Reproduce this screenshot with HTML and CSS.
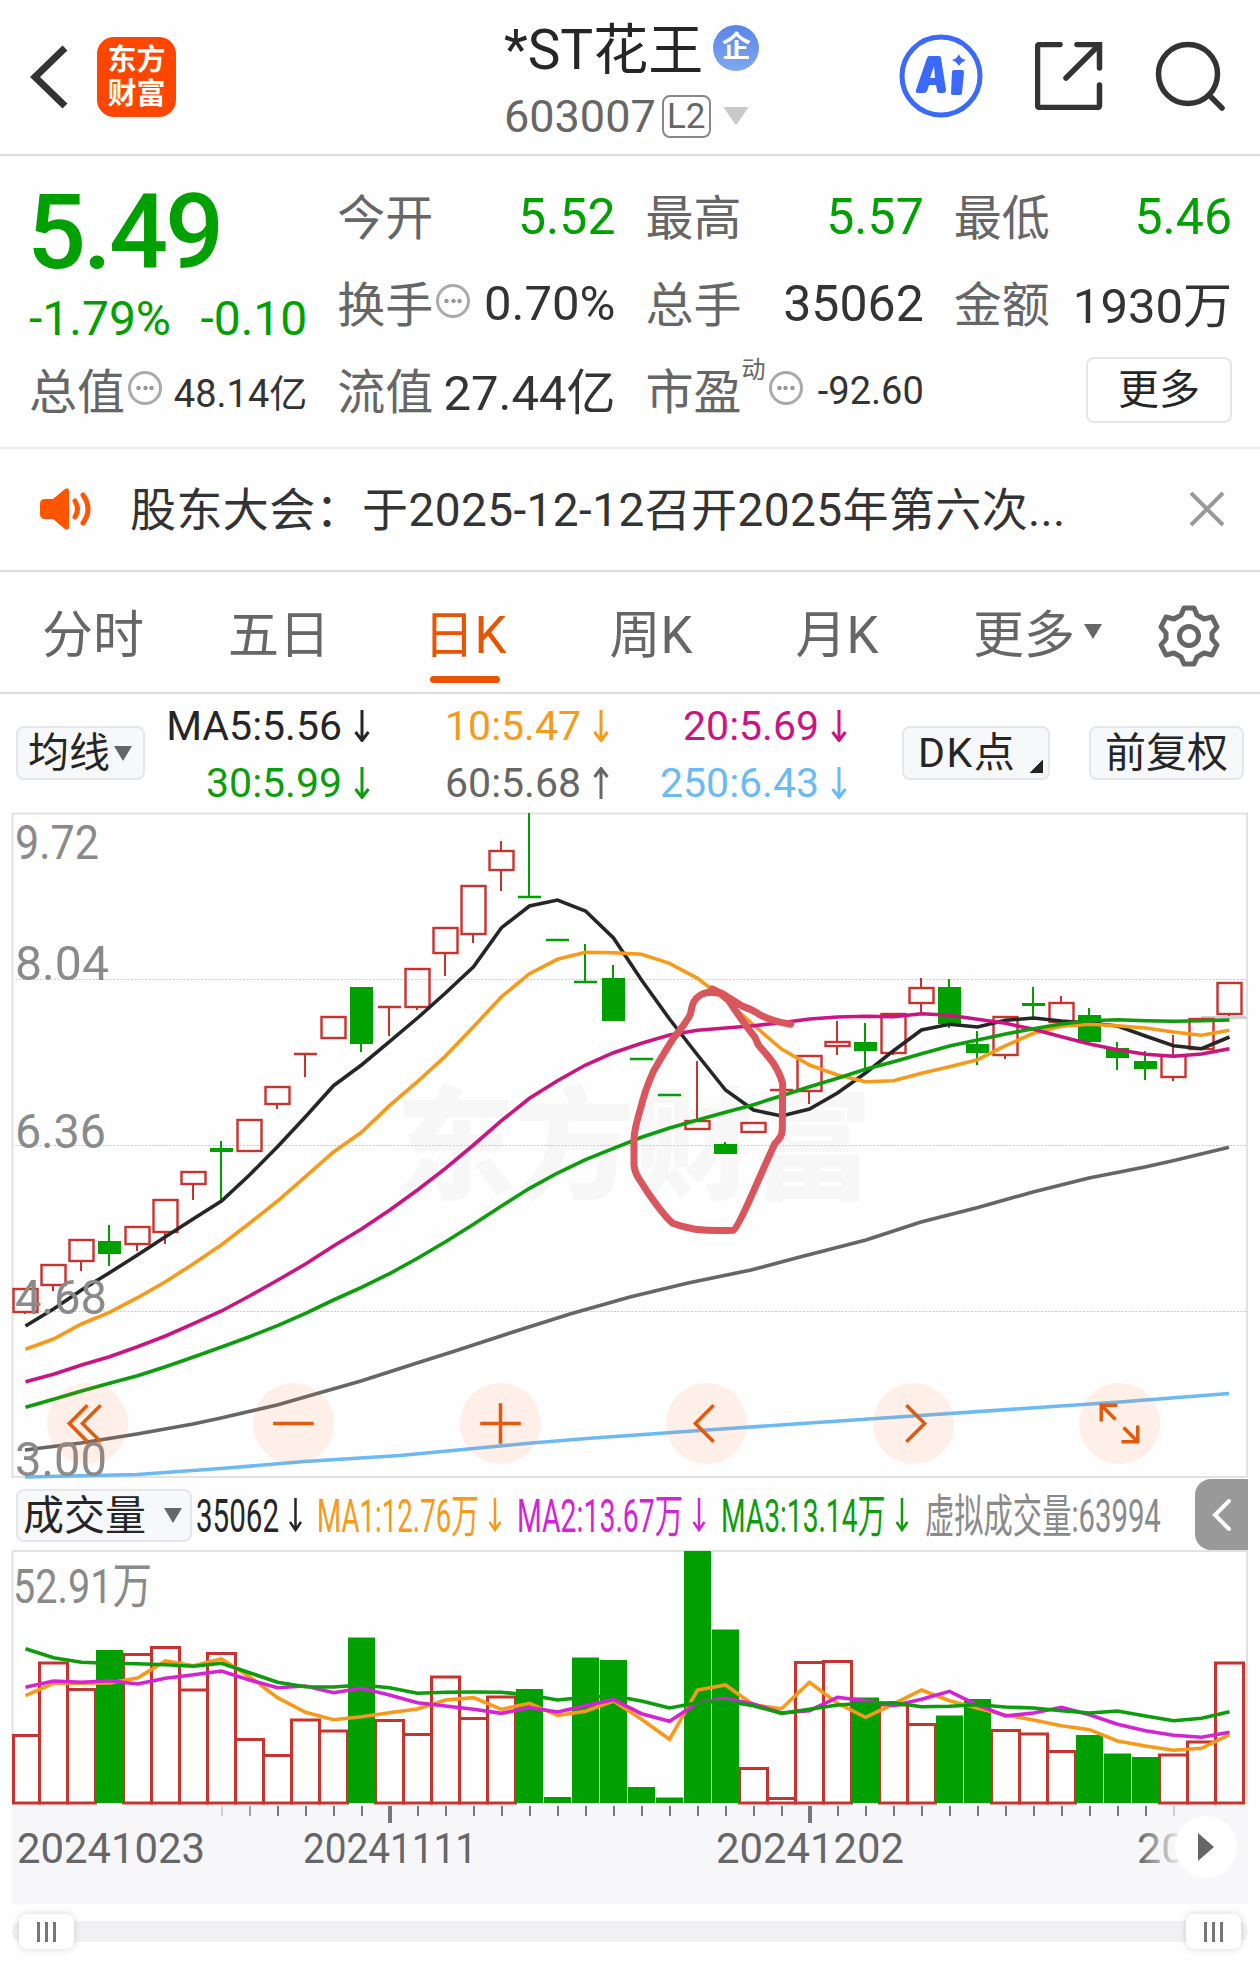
FILE: index.html
```
<!DOCTYPE html>
<html lang="zh-CN">
    <head>
        <meta charset="utf-8">
        <title>*ST花王 603007</title>
        <link rel="stylesheet" href="styles.css">
    </head>
    <body>
        <div class="page">
            <header class="topbar">
                <div class="left">
                    <svg class="back" width="40" height="66" viewBox="0 0 40 66"><path d="M35 4L5 33L35 62"/></svg>
                    <div class="logo"><span>东方</span><span>财富</span></div>
                </div>
                <div class="stock">
                    <div class="name"><span>*ST花王</span><i class="badge">企</i></div>
                    <div class="code">603007<span class="level">L2</span><svg width="26" height="20" viewBox="0 0 26 20"><path d="M2 1h22q2 0 1 1L14 18q-1 1-2 0L1 2q-1-1 1-1z"/></svg></div>
                </div>
                <div class="actions">
                    <svg width="84" height="84" viewBox="0 0 84 84">
                        <circle cx="42" cy="42" r="39" fill="none" stroke="#3a69fb" stroke-width="5"/>
                        <path d="M30 22h10q2 0 2 2l5 32q0 3-3 3h-4q-2 0-2-3l-1-5h-7l-2 6q-1 2-3 2h-6q-3 0-2-3l11-32q1-2 2-2zM35 32l-4 12h5z" fill="#3a69fb" fill-rule="evenodd"/>
                        <path d="M55 36h8q2 0 2 2l-2 21q0 2-2 2h-7q-2 0-2-2l1-21q0-2 2-2z" fill="#3a69fb"/>
                        <path d="M60 20q1 5 7 6q-5 2-7 6q-2-4-7-6q5-1 7-6z" fill="#3a69fb"/>
                    </svg>
                    <svg class="line" width="68" height="68" viewBox="0 0 68 68"><path d="M25 2.500H5q-2.500 0-2.500 2.500V63q0 2.500 2.500 2.500H62q2.500 0 2.500-2.500V43M42 2.500H64.500V26M63 4L31 36"/></svg>
                    <svg class="line" width="70" height="70" viewBox="0 0 70 70"><circle cx="33" cy="33" r="29.500"/><path d="M54 54L67 67"/></svg>
                </div>
            </header>

            <section class="quote">
                <div class="last">
                    <div class="price">5.49</div>
                    <div class="change"><span>-1.79%</span><span>-0.10</span></div>
                </div>
                <div class="cell"><label>今开</label><b class="down">5.52</b></div>
                <div class="cell"><label>最高</label><b class="down">5.57</b></div>
                <div class="cell"><label>最低</label><b class="down">5.46</b></div>
                <div class="cell"><label>换手</label><i class="dots"></i><b class="mid">0.70%</b></div>
                <div class="cell"><label>总手</label><b>35062</b></div>
                <div class="cell"><label>金额</label><b class="mid cjk">1930万</b></div>
                <div class="cell"><label>总值</label><i class="dots"></i><b class="small">48.14亿</b></div>
                <div class="cell"><label>流值</label><b class="mid cjk">27.44亿</b></div>
                <div class="cell"><label>市盈</label><sup>动</sup><i class="dots"></i><b class="small">-92.60</b></div>
                <div class="cell"><button class="more">更多</button></div>
            </section>

            <section class="notice">
                <svg width="52" height="42" viewBox="0 0 52 42"><path d="M5 11h8L25 1q4-2 4 2v36q0 4-4 2L13 31H5q-5 0-5-5V16q0-5 5-5z" fill="#ff5500"/><path d="M35 13q5 8 0 16M43 7q10 14 0 28" fill="none" stroke="#ff5500" stroke-width="5" stroke-linecap="round"/></svg>
                <p>股东大会：于2025-12-12召开2025年第六次...</p>
                <svg class="close" width="36" height="36" viewBox="0 0 36 36"><path d="M2 2L34 34M34 2L2 34"/></svg>
            </section>

            <nav class="tabs">
                <a>分时</a>
                <a>五日</a>
                <a class="active">日K</a>
                <a>周K</a>
                <a>月K</a>
                <a class="drop">更多<i class="tri"></i></a>
                <svg class="gear" width="62" height="62" viewBox="-31 -31 62 62"><path d="M-5 -28H5L8 -21L15 -17L23 -19L28 -9L23 -3V3L28 9L23 19L15 17L8 21L5 28H-5L-8 21L-15 17L-23 19L-28 9L-23 3V-3L-28 -9L-23 -19L-15 -17L-8 -21Z"/><circle r="9.500"/></svg>
            </nav>

            <section class="ma">
                <button class="chip avg">均线<i class="tri"></i></button>
                <div class="values">
                    <span class="c5">MA5:5.56<svg><use href="#arrow"/></svg></span>
                    <span class="c10">10:5.47<svg><use href="#arrow"/></svg></span>
                    <span class="c20">20:5.69<svg><use href="#arrow"/></svg></span>
                    <span class="c30">30:5.99<svg><use href="#arrow"/></svg></span>
                    <span class="c60">60:5.68<svg class="up"><use href="#arrow"/></svg></span>
                    <span class="c250">250:6.43<svg><use href="#arrow"/></svg></span>
                </div>
                <button class="chip dk">DK点<i class="corner"></i></button>
                <button class="chip fq">前复权</button>
            </section>

            <section class="chart">
                <svg id="kline" width="1260" height="665" viewBox="0 813 1260 665">
                    <defs><symbol id="arrow" viewBox="0 0 16 32" overflow="visible"><path d="M8 0V30M1.500 22L8 30.500L14.500 22" fill="none" stroke="currentColor" stroke-width="3"/></symbol></defs>
                </svg>
                <div class="tools">
                    <svg viewBox="-40 -40 80 80"><path d="M0 -18L-18 0L0 18M13 -18L-5 0L13 18"/></svg>
                    <svg viewBox="-40 -40 80 80"><path d="M-20 0H20"/></svg>
                    <svg viewBox="-40 -40 80 80"><path d="M-20 0H20M0 -20V20"/></svg>
                    <svg viewBox="-40 -40 80 80"><path d="M7 -18L-11 0L7 18"/></svg>
                    <svg viewBox="-40 -40 80 80"><path d="M-7 -18L11 0L-7 18"/></svg>
                    <svg viewBox="-40 -40 80 80"><path d="M-18 -2V-18H-2M-18 -18L-4 -4M18 2V18H2M18 18L4 4"/></svg>
                </div>
            </section>

            <section class="vol-legend">
                <button class="chip vol">成交量<i class="tri"></i></button>
                <svg class="legend" width="980" height="72" viewBox="192 1478 980 72">
                    <text transform="translate(196 1532) scale(.643 1)" fill="#262626">35062</text>
                    <text transform="translate(317 1532) scale(.602 1)" fill="#f79a1a">MA1:12.76万</text>
                    <text transform="translate(517 1532) scale(.618 1)" fill="#d423d4">MA2:13.67万</text>
                    <text transform="translate(721 1532) scale(.612 1)" fill="#0c9c0c">MA3:13.14万</text>
                    <text transform="translate(925 1532) scale(.637 1)" fill="#8a8a8a">虚拟成交量:63994</text>
                    <g fill="none" stroke-width="2.500">
                        <path d="M295.500 1498V1530M290 1522L295.500 1530L301 1522" stroke="#262626"/>
                        <path d="M495 1498V1530M489.500 1522L495 1530L500.500 1522" stroke="#f79a1a"/>
                        <path d="M699 1498V1530M693.500 1522L699 1530L704.500 1522" stroke="#d423d4"/>
                        <path d="M902 1498V1530M896.500 1522L902 1530L907.500 1522" stroke="#0c9c0c"/>
                    </g>
                </svg>
                <div class="fold"><svg width="20" height="32" viewBox="0 0 20 32"><path d="M17 2L3 16L17 30"/></svg></div>
            </section>

            <svg id="volume" width="1260" height="255" viewBox="0 1550 1260 255"></svg>
            <section class="axis">
                <svg id="axis" width="1236" height="99" viewBox="12 1805 1236 99"></svg>
                <div class="play"><svg width="16" height="28" viewBox="0 0 16 28"><path d="M0 0L16 14L0 28z"/></svg></div>
            </section>

            <section class="slider">
                <div class="handle"><i></i><i></i><i></i></div>
                <div class="handle"><i></i><i></i><i></i></div>
            </section>
        </div>
        <script src="chart.js"></script>
    </body>
</html>
```
FILE: styles.css
```
:root {
    --green: #00a000;
    --orange: #e85500;
    --text: #262626;
    --gray: #666;
    --line: #dcdcdc;
    --chip: #f7f8fa;
}
* {
    box-sizing: border-box;
}
html, body {
    margin: 0;
    padding: 0;
}
body {
    width: 1260px;
    height: 1967px;
    overflow: hidden;
    background: #fefefe;
    color: #333;
    font-family: Roboto, "Noto Sans CJK SC", sans-serif;
}
svg {
    display: block;
    flex: none;
}
button {
    padding: 0;
    font-family: inherit;
    color: var(--text);
}
i {
    font-style: normal;
}

/* header */
.topbar {
    display: flex;
    height: 156px;
    padding: 0 35px 0 30px;
    border-bottom: 2px solid var(--line);
}
.topbar .left {
    display: flex;
    align-items: center;
    width: 474px;
}
.back {
    fill: none;
    stroke: #333;
    stroke-width: 7;
}
.logo {
    display: flex;
    flex-direction: column;
    justify-content: center;
    align-items: center;
    width: 79px;
    height: 80px;
    margin-left: 27px;
    border-radius: 17px;
    background: #ff4600;
    color: #fff;
    font-size: 29px;
    line-height: 34px;
    font-weight: 700;
}
.stock {
    width: 380px;
    padding-top: 12px;
}
.stock .name {
    display: flex;
    align-items: center;
    height: 72px;
    color: var(--text);
    font-size: 55px;
}
.name span {
    padding-bottom: 6px;
}
.badge {
    width: 46px;
    height: 46px;
    margin-left: 10px;
    border-radius: 50%;
    background: linear-gradient(#5884e8, #7fa8ee);
    color: #fff;
    font-size: 29px;
    line-height: 44px;
    font-weight: 700;
    text-align: center;
}
.stock .code {
    display: flex;
    align-items: center;
    height: 64px;
    color: var(--gray);
    font-size: 45px;
}
.level {
    width: 49px;
    height: 43px;
    margin: 0 12px 0 6px;
    border: 2px solid #888;
    border-radius: 8px;
    font-size: 35px;
    line-height: 39px;
    text-align: center;
}
.code svg {
    fill: #c9c9c9;
}
.actions {
    display: flex;
    flex: 1;
    align-items: center;
    justify-content: space-between;
    padding: 0 0 2px 15px;
}
.line {
    fill: none;
    stroke: #333;
    stroke-width: 5.5;
    stroke-linecap: round;
}

/* quote */
.quote {
    display: grid;
    grid-template-columns: repeat(4, 1fr);
    grid-template-rows: repeat(3, 87px);
    column-gap: 30px;
    height: 293px;
    padding: 17px 28px 0 29px;
    border-bottom: 2px solid #ececec;
}
.last {
    grid-row: span 2;
    color: var(--green);
}
.price {
    height: 110px;
    margin-left: -2px;
    font-size: 104px;
    line-height: 120px;
    font-weight: 500;
    letter-spacing: -3px;
}
.change {
    display: flex;
    justify-content: space-between;
    font-size: 48px;
    line-height: 72px;
}
.cell {
    display: flex;
    align-items: center;
}
.cell label {
    padding-bottom: 5px;
    color: var(--gray);
    font-size: 48px;
}
.cell b {
    margin-left: auto;
    font-size: 50px;
    font-weight: 400;
    white-space: nowrap;
}
.cell .down {
    color: var(--green);
}
.cell .mid {
    font-size: 49px;
}
.cell .cjk {
    padding-bottom: 5px;
}
.cell .small {
    font-size: 38px;
}
.cell sup {
    width: 24px;
    margin-bottom: 42px;
    color: var(--gray);
    font-size: 24px;
    line-height: 1;
}
.dots {
    width: 34px;
    height: 34px;
    margin: -6px 0 0 3px;
    border: 3px solid #aaa;
    border-radius: 50%;
    background: radial-gradient(circle, #999 1.8px, transparent 2.6px) center / 7px 100% no-repeat, radial-gradient(circle, #999 1.8px, transparent 2.6px) 4px 0 / 7px 100% no-repeat, radial-gradient(circle, #999 1.8px, transparent 2.6px) 17px 0 / 7px 100% no-repeat;
}
.more {
    width: 146px;
    height: 66px;
    margin: -2px 0 0 auto;
    border: 2px solid #e6e6e6;
    border-radius: 8px;
    background: #fff;
    font-size: 41px;
    line-height: 56px;
}

/* notice */
.notice {
    display: flex;
    align-items: center;
    height: 123px;
    padding: 0 35px 2px 40px;
    border-bottom: 2px solid var(--line);
}
.notice p {
    flex: 1;
    margin: 0 0 0 38px;
    padding-bottom: 5px;
    font-size: 46px;
    letter-spacing: .4px;
    white-space: nowrap;
}
.close {
    fill: none;
    stroke: #999;
    stroke-width: 4;
}

/* tabs */
.tabs {
    display: grid;
    grid-template-columns: 186px 186px 186px 186px 186px 228px 60px;
    height: 122px;
    border-bottom: 2px solid var(--line);
    color: var(--gray);
    font-size: 51px;
    line-height: 128px;
    text-align: center;
}
.tabs .active {
    display: flex;
    flex-direction: column;
    align-items: center;
    color: var(--orange);
}
.tabs .active::after {
    content: "";
    width: 70px;
    height: 7px;
    margin-top: -24px;
    border-radius: 4px;
    background: var(--orange);
}
.tri {
    display: inline-block;
    border: solid transparent;
    border-width: 15px 9px 0;
    border-top-color: var(--gray);
}
.drop {
    display: flex;
    align-items: center;
    padding-left: 43px;
}
.drop .tri {
    margin: -10px 0 0 9px;
}
.gear {
    align-self: center;
    fill: none;
    stroke: var(--gray);
    stroke-width: 5;
    stroke-linejoin: round;
}

/* moving averages */
.ma {
    display: flex;
    height: 119px;
    padding: 32px 16px 0;
}
.chip {
    display: flex;
    flex: none;
    align-items: center;
    height: 54px;
    border: 2px solid #e4e6eb;
    border-radius: 8px;
    background: var(--chip);
    font-size: 41px;
    line-height: 50px;
}
.avg {
    width: 129px;
    padding-left: 10px;
}
.avg .tri {
    margin-left: 4px;
}
.values {
    display: grid;
    grid-template-columns: 225px 239px 238px;
    grid-template-rows: 57px 57px;
    margin-top: -29px;
    font-size: 41px;
}
.values span {
    display: flex;
    align-items: center;
    justify-content: flex-end;
}
.values svg {
    width: 16px;
    height: 32px;
    margin-left: 12px;
}
.values .up {
    transform: rotate(180deg);
}
.c5 { color: #262626; }
.c10 { color: #f79a1a; }
.c20 { color: #cc1480; }
.c30 { color: #0c9c0c; }
.c60 { color: #666; }
.c250 { color: #6cbaf5; }
.dk {
    justify-content: space-between;
    width: 148px;
    margin-left: 55px;
    padding: 0 5px 0 14px;
    letter-spacing: 1.5px;
}
.corner {
    align-self: flex-end;
    width: 13px;
    height: 14px;
    margin-bottom: 5px;
    background: linear-gradient(to bottom right, transparent 50%, #262626 50%);
}
.fq {
    justify-content: center;
    width: 155px;
    margin-left: 39px;
}

/* chart */
.chart {
    position: relative;
    height: 665px;
}
.chart svg {
    overflow: visible;
}
.tools {
    position: absolute;
    left: 47px;
    top: 570px;
    display: flex;
    gap: 125.4px;
}
.tools svg {
    width: 81px;
    height: 81px;
    border-radius: 50%;
    background: rgba(255, 110, 40, .1);
    fill: none;
    stroke: #e05a10;
    stroke-width: 3.5;
}
.scale {
    fill: #8a8a8a;
    font-size: 49px;
}
.watermark {
    fill: #f7f7f7;
    font-size: 122px;
    font-weight: 900;
}
.mark {
    fill: none;
    stroke: #d9565c;
    stroke-width: 21;
    stroke-linecap: round;
    stroke-linejoin: round;
}

.vol-legend {
    display: flex;
    height: 72px;
    padding: 0 12px 0 16px;
}
.vol {
    width: 176px;
    height: 53px;
    margin-top: 11px;
    padding-left: 5px;
    font-size: 41px;
}
.vol .tri {
    margin-left: 18px;
}
.legend {
    font-size: 46px;
}
.fold {
    display: flex;
    align-items: center;
    justify-content: center;
    width: 53px;
    margin: 1px 0 0 auto;
    border-radius: 16px 0 0 16px;
    background: #999;
}
.fold path {
    fill: none;
    stroke: #fff;
    stroke-width: 4;
    stroke-linecap: round;
}

/* date axis */
.axis {
    position: relative;
    height: 99px;
    margin: 0 12px;
    background: #f7f7fa;
}
.axis text {
    fill: #666;
    font-size: 43px;
}
.play {
    position: absolute;
    right: 11px;
    top: 11px;
    display: flex;
    align-items: center;
    justify-content: center;
    width: 62px;
    height: 62px;
    border-radius: 50%;
    background: #fff;
}
.play path {
    fill: #666;
}
.slider {
    display: flex;
    align-items: center;
    justify-content: space-between;
    height: 21px;
    margin: 17px 12px 0;
    padding: 0 7px;
    border-radius: 11px;
    background: #f1f1f4;
}
.handle {
    display: flex;
    align-items: center;
    justify-content: center;
    gap: 5px;
    width: 55px;
    height: 35px;
    border-radius: 8px;
    background: #fff;
    box-shadow: 0 0 7px rgba(0, 0, 0, .16);
}
.handle i {
    width: 3px;
    height: 20px;
    background: #777;
}
```
FILE: chart.js
```
(function(){
    var NS = "http://www.w3.org/2000/svg";
    var RED = "#c8332f", GREEN = "#00a000";
    var X0 = 25.5, STEP = 28, BASE = 1803;

    function add(parent, tag, attrs, text) {
        var el = document.createElementNS(NS, tag);
        for (var k in attrs) el.setAttribute(k, attrs[k]);
        if (text) el.textContent = text;
        parent.appendChild(el);
        return el;
    }
    function cx(i) { return X0 + STEP * i; }
    function line(parent, x1, y1, x2, y2, color, w) {
        add(parent, "path", { d: "M" + x1 + " " + y1 + "L" + x2 + " " + y2, stroke: color, "stroke-width": w, fill: "none" });
    }
    function series(parent, ys, color) {
        var pts = ys.map(function(y, i) { return cx(i) + "," + y; }).join(" ");
        add(parent, "polyline", { points: pts, fill: "none", stroke: color, "stroke-width": 3.6 });
    }
    function label(parent, x, y, len, text, cls) {
        add(parent, "text", { x: x, y: y, textLength: len, lengthAdjust: "spacingAndGlyphs", "class": cls }, text);
    }

    // [up, high, body top, body bottom, low]
    var candles = [
        [1,1289,1289,1312,1314],[1,1265,1265,1285,1291],[1,1240,1240,1261,1271],[0,1225,1241,1254,1266],
        [1,1227,1227,1244,1251],[1,1200,1200,1232,1244],[1,1172,1172,1184,1200],[0,1141,1148,1152,1200],
        [1,1120,1120,1151,1151],[1,1087,1087,1104,1109],[1,1054,1054,1054,1077],[1,1017,1017,1038,1038],
        [0,987,987,1044,1052],[1,1007,1007,1007,1036],[1,969,969,1007,1010],[1,928,928,953,976],
        [1,886,886,934,943],[1,841,851,870,891],[0,813,897,897,897],[0,940,940,940,940],
        [0,944,982,982,982],[0,965,978,1021,1021],[0,1059,1059,1059,1059],[0,1095,1095,1095,1095],
        [1,1061,1121,1129,1129],[0,1142,1144,1154,1154],[1,1123,1123,1132,1132],[1,1090,1090,1090,1090],
        [1,1056,1056,1091,1104],[1,1021,1042,1046,1055],[0,1023,1042,1051,1069],[1,1014,1014,1053,1055],
        [1,978,988,1003,1014],[0,979,987,1024,1028],[0,1031,1044,1053,1065],[1,1017,1017,1055,1059],
        [0,987,1003,1006,1017],[1,996,1003,1022,1022],[0,1008,1015,1042,1042],[0,1042,1048,1058,1070],
        [0,1051,1061,1069,1080],[1,1035,1056,1077,1081],[1,1019,1019,1049,1049],[1,983,983,1014,1016]
    ];
    var ma = {
        "#262626": [1326,1309,1290,1272.7,1255,1236.7,1218.7,1201,1175,1146.7,1116.7,1085.7,1065,1041.7,1018,993,966.7,927.7,906,900,911,938,980,1019,1055,1090,1110,1116,1109,1093,1073,1050.7,1030,1024.3,1027,1020.3,1018,1021,1023,1026,1036,1045.7,1048.7,1037],
        "#f79a1a": [1349.3,1339,1324,1312.3,1297.7,1281.7,1263.7,1244.7,1223.3,1201,1176.7,1152,1132.3,1105.7,1081.7,1056,1026.7,996.7,973.7,959.3,952.3,952.7,954.3,963.3,978.3,1000,1025,1049,1065,1075,1081.7,1080.7,1073.3,1066.7,1059.7,1045.7,1033.3,1026.3,1024.3,1025.7,1028,1032,1035.3,1030.3],
        "#cc1480": [1381.7,1374.3,1365,1356.7,1346.7,1336,1323.7,1311,1296,1280.3,1264,1246,1229,1210.3,1190,1168.3,1145,1120.7,1098.3,1080.7,1065,1052.7,1043.3,1035,1030.3,1028,1025.7,1022.7,1019,1017,1016.3,1016.7,1013.7,1015.3,1019.3,1023.3,1029.3,1036.7,1044,1049.7,1054.3,1056.3,1054,1048.7],
        "#0c9c0c": [1407.3,1399.3,1391,1383.3,1375.7,1366.7,1357,1347,1336.7,1325.7,1313.3,1300,1287.3,1273.7,1258.3,1241.7,1224.3,1206,1188.3,1173,1159.7,1148.3,1137.3,1128,1120,1112.3,1104.7,1095.7,1086.7,1078.3,1069.3,1061.7,1053.7,1046,1040,1034,1028.7,1024,1020.7,1019.7,1020.7,1021.3,1020.7,1020]
    };
    var ma60 = "25,1450 81,1443 137,1434 193,1424 221,1418 277,1405 305,1397 333,1389 361,1381 389,1372 417,1363 455,1351 510,1333 570,1314 630,1297 688,1283 751,1270 800,1257 866,1240 921,1222 977,1207.700 1033,1192 1089,1178 1145,1167 1173,1160.700 1229,1147.300";
    var ma250 = "25,1477 137,1474.500 221,1468.500 305,1461.500 400,1455.500 500,1446 532,1443 587,1438.500 707,1430 817,1422.500 913,1416 1120,1402 1229,1393.500";

    // price panel
    var k = document.getElementById("kline");
    label(k, 396, 1189, 476, "东方财富", "watermark");
    [979.5, 1145.5, 1311.5].forEach(function(y) {
        add(k, "path", { d: "M12 " + y + "H1247", stroke: "#ccc", "stroke-width": 1, "stroke-dasharray": "2 1.500" });
    });
    add(k, "path", { d: "M12.500 813V1478M1247 813V1478M12 813.500H1248M12 1477H1248", stroke: "#e2e2e2", "stroke-width": 2 });
    line(k, 1201, 1017.5, 1247, 1017.5, "#d0d0d0", 3);
    candles.forEach(function(c, i) {
        var x = cx(i), color = c[0] ? RED : GREEN;
        if (c[1] < c[2]) line(k, x - .5, c[1], x - .5, c[2], color, 2);
        if (c[4] > c[3]) line(k, x - .5, c[3], x - .5, c[4], color, 2);
        if (c[2] === c[3]) {
            line(k, x - 11.5, c[2], x + 11.5, c[2], color, 2.5);
        } else if (c[0]) {
            add(k, "rect", { x: x - 12, y: c[2], width: 24, height: c[3] - c[2], fill: "none", stroke: color, "stroke-width": 2.4 });
        } else {
            add(k, "rect", { x: x - 11.5, y: c[2], width: 23, height: c[3] - c[2], fill: color });
        }
    });
    for (var color in ma) series(k, ma[color], color);
    add(k, "polyline", { points: ma60, fill: "none", stroke: "#666", "stroke-width": 3.6 });
    add(k, "polyline", { points: ma250, fill: "none", stroke: "#6cbaf5", "stroke-width": 3.6 });
    add(k, "path", {
        "class": "mark",
        transform: "translate(400 800) scale(.3333)",
        d: "M1172 673Q1120 665 1080 645Q1060 630 1030 620L965 580L925 577Q895 582 882 605Q877 612 872 640Q865 660 820 715Q785 770 760 815Q735 870 722 925Q702 990 702 1020V1095Q705 1120 718 1138Q740 1175 770 1215Q800 1255 818 1270Q850 1282 885 1288Q940 1294 1000 1291Q1012 1285 1060 1175Q1080 1130 1100 1085L1125 1030Q1146 1012 1147 990L1148 850Q1135 805 1105 770L1075 735L1065 712Q1035 675 985 600L960 578L937 567"
    });
    label(k, 15, 859, 84, "9.72", "scale");
    label(k, 15, 980, 94, "8.04", "scale");
    label(k, 15, 1148, 91, "6.36", "scale");
    label(k, 15, 1314, 92, "4.68", "scale");
    label(k, 15, 1476, 92, "3.00", "scale");

    // volume panel, [up, top]
    var bars = [
        [1,1735.5],[1,1663],[1,1689.5],[0,1650],[1,1654.5],[1,1647.5],[1,1690],[1,1653.5],[1,1739.5],[1,1755.5],[1,1720],
        [1,1731],[0,1637.5],[1,1720.5],[1,1734.5],[1,1677],[1,1718.5],[1,1697],[0,1689],[0,1797],[0,1657.5],[0,1660],
        [0,1787],[0,1797.5],[0,1551],[0,1629.5],[1,1768.5],[1,1798.5],[1,1662.5],[1,1661.5],[0,1697.5],[1,1705],[1,1724.5],
        [0,1715.5],[0,1699],[1,1730.5],[1,1734],[1,1751.5],[0,1735],[0,1753.5],[0,1757],[1,1755],[1,1742],[1,1663]
    ];
    var volMa = {
        "#f79a1a": [1695.7,1683.3,1683.3,1683,1678,1661,1665.7,1659,1676.7,1697.7,1712.3,1719.7,1716.7,1712.7,1709,1700,1697.7,1709.3,1703.3,1715.3,1711.3,1701,1719.3,1739.3,1690,1685,1705,1708.7,1682.3,1703.3,1717.3,1704,1690,1700.7,1708.3,1715,1720,1725.7,1729.7,1741,1746,1750.3,1748.3,1734.7],
        "#d423d4": [1687.3,1681,1682.3,1680.7,1684,1678.3,1674.7,1671,1680,1687.7,1686,1692.7,1688.3,1695,1702.7,1706,1709.3,1713.3,1707.7,1712,1705.7,1699.7,1713.7,1721.3,1703,1698.3,1704,1713,1710.7,1697.3,1700.7,1705.7,1699.3,1691.3,1705,1716,1713,1707.3,1714.7,1724.3,1730.7,1735.3,1737.3,1732.3],
        "#0c9c0c": [1648.7,1657.7,1662.3,1663.3,1663.7,1664.7,1666.3,1663.3,1672.7,1682.3,1686.7,1687,1685,1687.7,1693.3,1692.3,1692,1692.3,1695,1700,1697.3,1696,1701,1708,1702.7,1701.3,1705.7,1713.3,1709.3,1705,1703.3,1702.7,1706.7,1706.3,1704.7,1707,1708,1710.7,1713,1711,1716,1720.7,1718.3,1711.7]
    };
    var v = document.getElementById("volume");
    add(v, "path", { d: "M12.500 1551V1804M1247 1551V1804M12 1551H1248", stroke: "#e2e2e2", "stroke-width": 2 });
    bars.forEach(function(b, i) {
        var left = i ? cx(i) - 14 : 13.5;
        if (b[0]) {
            add(v, "rect", { x: left, y: b[1], width: cx(i) + 14 - left, height: BASE - b[1], fill: "none", stroke: RED, "stroke-width": 3 });
        }
    });
    bars.forEach(function(b, i) {
        if (!b[0]) add(v, "rect", { x: cx(i) - 13.5, y: b[1], width: 27, height: BASE - b[1], fill: GREEN });
    });
    for (var c in volMa) series(v, volMa[c], c);
    label(v, 13, 1603, 139, "52.91万", "scale amount");

    // ticks and dates
    var a = document.getElementById("axis");
    for (var i = 7; i <= 41; i++) {
        var major = i === 13 || i === 28;
        var tick = add(a, "rect", { x: cx(i) - (major ? 1.5 : .5), y: 1806, width: major ? 4 : 2, height: major ? 17 : 10, fill: "#777" });
        if (i === 7 || i === 41) tick.setAttribute("opacity", .3);
        if (i === 8) tick.setAttribute("opacity", .65);
    }
    label(a, 17, 1863, 188, "20241023", "");
    label(a, 303, 1863, 174, "20241111", "");
    label(a, 716, 1863, 188, "20241202", "");
    var fade = add(add(a, "defs", {}), "linearGradient", { id: "fade", gradientUnits: "userSpaceOnUse", x1: 1138, y1: 0, x2: 1180, y2: 0 });
    add(fade, "stop", { offset: 0, "stop-color": "#666" });
    add(fade, "stop", { offset: 1, "stop-color": "#666", "stop-opacity": .1 });
    add(a, "text", { x: 1137, y: 1863, style: "fill:url(#fade)" }, "20");
})();
```
